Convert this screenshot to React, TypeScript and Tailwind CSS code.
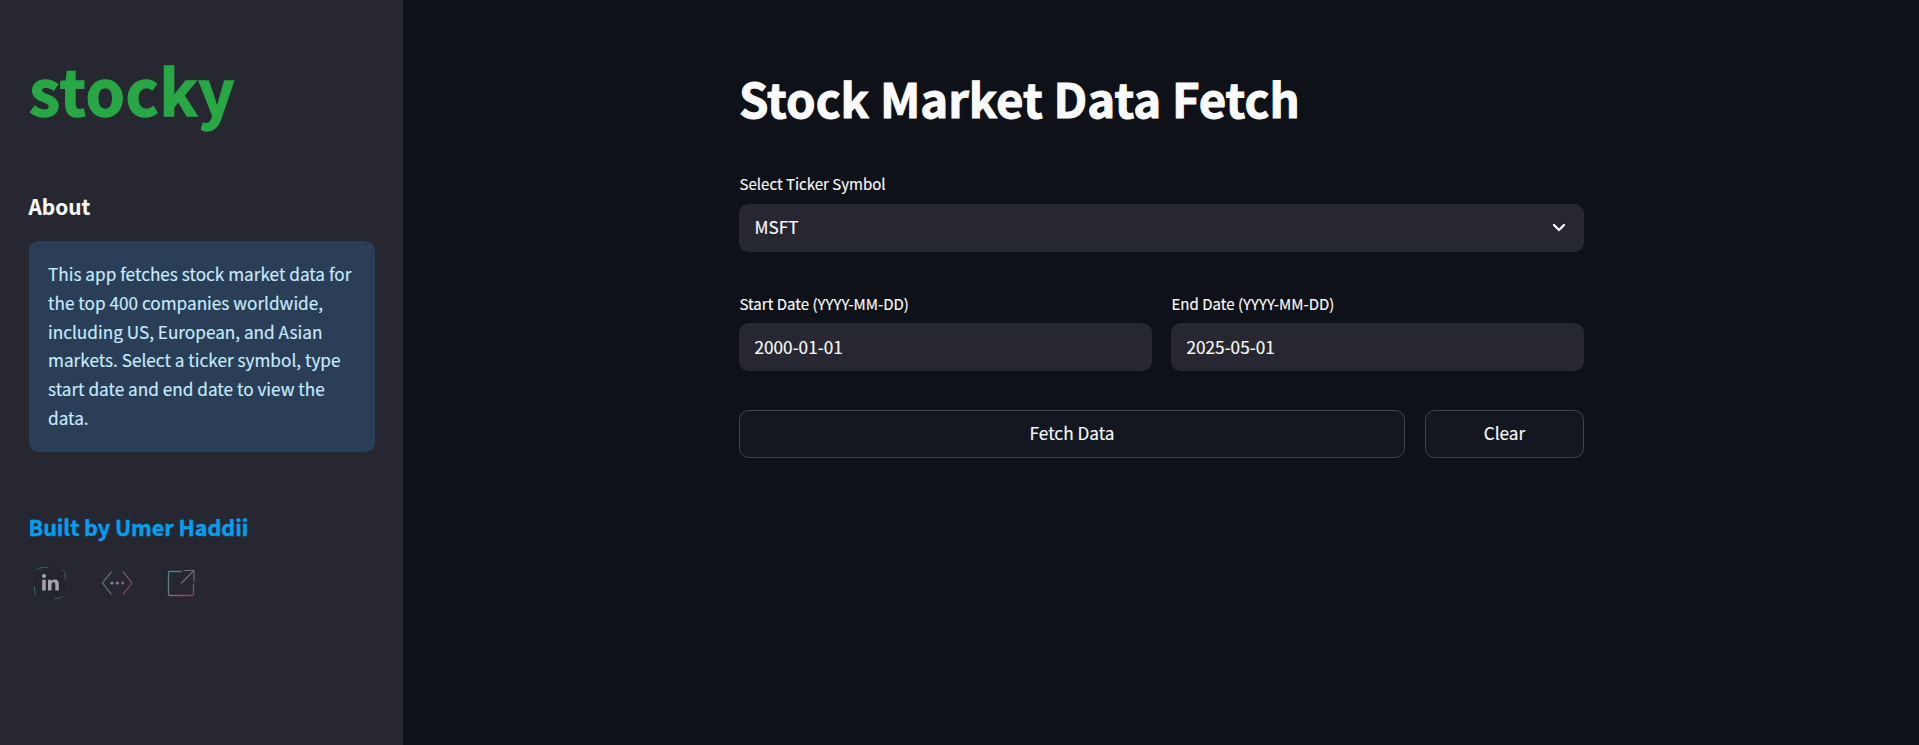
import type { ReactNode } from 'react';

function LinkedinIcon() {
    return (
        <svg width="34" height="34" viewBox="0 0 34 34" fill="none">
            <rect x="1.5" y="1.5" width="31" height="31" rx="8" fill="#25252e" />
            <g stroke="#35636b" strokeWidth="1" strokeLinecap="round">
                <path d="M4 3.6C6 1.8 9 1.4 14.5 1.4" />
                <path d="M30 4c1.900 2 2.400 5 2.400 10" />
                <path d="M1.500 20.500c0 4 .5 6.500 1.500 8.500" />
                <path d="M22 32.500c3.500 0 5.500-.5 7.500-2" />
            </g>
            <g fill="#a5a5a9">
                <circle cx="11" cy="10" r="2" />
                <path d="M9.200 13.700h3.500V24.500H9.200z" />
                <path d="M15 13.700h3.300v1.500c.6-1.100 1.800-1.800 3.400-1.800 3.200 0 4.100 2 4.100 5v6.100h-3.500v-5.400c0-1.700-.3-2.800-1.700-2.800-1.500 0-2.100 1.100-2.100 2.800v5.400H15z" />
            </g>
        </svg>
    );
}

function CodeIcon() {
    return (
        <svg width="34" height="34" viewBox="0 0 34 34" fill="none">
            <defs>
                <linearGradient id="code" x1="2" y1="10" x2="32" y2="24" gradientUnits="userSpaceOnUse">
                    <stop offset="0" stopColor="#458891" />
                    <stop offset="0.500" stopColor="#85777f" />
                    <stop offset="1" stopColor="#8b4245" />
                </linearGradient>
            </defs>
            <path d="M11.500 5.500L2.500 17l9 11.500M23 5.500L32 17l-9 11.500" stroke="url(#code)" strokeWidth="1.100" />
            <circle cx="12" cy="17" r="1.600" fill="#648b92" />
            <circle cx="17.300" cy="17" r="1.600" fill="#85848a" />
            <circle cx="22.700" cy="17" r="1.600" fill="#8f686d" />
        </svg>
    );
}

function ExternalIcon() {
    return (
        <svg width="34" height="34" viewBox="0 0 34 34" fill="none">
            <defs>
                <linearGradient id="ext" x1="3" y1="4" x2="30" y2="31" gradientUnits="userSpaceOnUse">
                    <stop offset="0" stopColor="#3f868e" />
                    <stop offset="0.500" stopColor="#7c6f77" />
                    <stop offset="1" stopColor="#8b4044" />
                </linearGradient>
            </defs>
            <path d="M17.500 5.500h-12a1 1 0 0 0-1 1v22a1 1 0 0 0 1 1h23a1 1 0 0 0 1-1v-11" stroke="url(#ext)" strokeWidth="1.300" />
            <path d="M19.500 4.500h10.500v11M30 4.500L17 17.500" stroke="#75686f" strokeWidth="1.200" />
        </svg>
    );
}

function Field({ label, labelHeight = 'h-[29px]', children }: { label: string; labelHeight?: string; children: ReactNode }) {
    return (
        <label className="block flex-1">
            <span className={`block ${labelHeight} pl-[0.5px] text-[15.040px] leading-[19px]`}>{label}</span>
            <div className="flex h-12 items-center justify-between rounded-[9.600px] bg-[#262730] pr-[18px] pb-px pl-[15.500px] text-[17.200px]">
                {children}
            </div>
        </label>
    );
}

export default function App() {
    const buttonStyle = 'h-12 rounded-[9.600px] border border-[#41434a] bg-[#131720] pb-[2px] text-[17.200px] leading-[28px]';

    return (
        <div className="flex h-[745px] overflow-hidden bg-[#0e1117] font-['Noto_Sans_CJK_SC','Source_Sans_Pro',sans-serif] text-[#fafafa] [-webkit-text-stroke:0.150px]">
            <aside className="w-[403px] shrink-0 bg-[#262730] pr-7 pl-[29px]">
                <h1 className="mt-[47px] text-[63px] leading-[84px] font-bold tracking-[0.700px] text-[#28a745] [-webkit-text-stroke:1.400px]">stocky</h1>
                <h2 className="mt-[61px] -ml-[0.5px] text-[20.800px] leading-[29px] font-semibold">About</h2>
                <div className="mt-5 h-[211px] rounded-[9.600px] bg-[#2b3e57] px-[19px] py-[19px] text-[17.200px] leading-[28.800px] text-[#c7ebff]">
                    This app fetches stock market data for the top 400 companies worldwide, including US, European, and Asian markets. Select a ticker symbol, type start date and end date to view the data.
                </div>
                <h3 className="mt-[60px] -ml-[0.5px] text-[21.500px] leading-[30px] font-bold text-[#00a0f0] [-webkit-text-stroke:0.400px]">Built by Umer Haddii</h3>
                <div className="mt-6 flex items-center pl-1">
                    <LinkedinIcon />
                    <div className="ml-[33px]"><CodeIcon /></div>
                    <div className="ml-[30px]"><ExternalIcon /></div>
                </div>
            </aside>
            <main className="flex-1">
                <div className="ml-[336px] w-[845px]">
                    <h1 className="mt-[66px] text-[47.300px] leading-[63px] font-bold [-webkit-text-stroke:1px]">Stock Market Data Fetch</h1>
                    <div className="mt-[45px]">
                        <Field label="Select Ticker Symbol" labelHeight="h-[30px]">
                            <span className="pb-px">MSFT</span>
                            <svg width="14" height="10" viewBox="0 0 14 10" fill="none" stroke="#fafafa" strokeWidth="2.300" strokeLinecap="round" strokeLinejoin="round">
                                <path d="M2 2l5 5 5-5" />
                            </svg>
                        </Field>
                    </div>
                    <div className="mt-[42px] flex gap-[19px]">
                        <Field label="Start Date (YYYY-MM-DD)">2000-01-01</Field>
                        <Field label="End Date (YYYY-MM-DD)">2025-05-01</Field>
                    </div>
                    <div className="mt-[39px] flex gap-5">
                        <button className={`${buttonStyle} w-[666px]`}>Fetch Data</button>
                        <button className={`${buttonStyle} flex-1`}>Clear</button>
                    </div>
                </div>
            </main>
        </div>
    );
}
